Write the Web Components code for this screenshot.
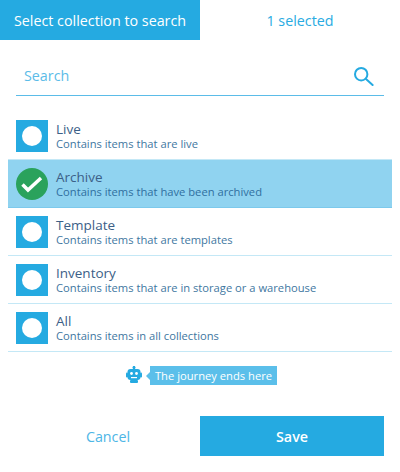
<!DOCTYPE html>
<html>
<head>
<meta charset="utf-8">
<style>
    html, body { margin: 0; padding: 0; background: #fff; }
    body { width: 400px; height: 472px; overflow: hidden; font-family: "Open Sans", "Noto Sans", sans-serif; }
</style>
</head>
<body>
<collection-picker>
    <picker-tabs active="Select collection to search" other="1 selected"></picker-tabs>
    <search-box placeholder="Search"></search-box>
    <div style="padding-top: 16px;">
        <collection-row name="Live" description="Contains items that are live"></collection-row>
        <collection-row name="Archive" description="Contains items that have been archived" selected></collection-row>
        <collection-row name="Template" description="Contains items that are templates"></collection-row>
        <collection-row name="Inventory" description="Contains items that are in storage or a warehouse"></collection-row>
        <collection-row name="All" description="Contains items in all collections"></collection-row>
    </div>
    <journey-end>The journey ends here</journey-end>
    <picker-actions></picker-actions>
</collection-picker>

<script>
class CollectionPicker extends HTMLElement {
    constructor() {
        super();
        this.attachShadow({ mode: "open" });
        this.shadowRoot.innerHTML = `
            <style>
                :host { display: block; width: 400px; height: 472px; }
            </style>
            <slot></slot>
        `;
    }
}

class PickerTabs extends HTMLElement {
    constructor() {
        super();
        this.attachShadow({ mode: "open" });
        this.shadowRoot.innerHTML = `
            <style>
                :host { display: flex; height: 40px; font-size: 14.3px; }
                div {
                    width: 200px;
                    display: flex;
                    justify-content: center;
                    align-items: center;
                    color: #29abe2;
                }
                .active { background-color: #25aae1; color: #fff; }
            </style>
            <div class="active">${this.getAttribute("active")}</div>
            <div>${this.getAttribute("other")}</div>
        `;
    }
}

class SearchBox extends HTMLElement {
    constructor() {
        super();
        this.attachShadow({ mode: "open" });
        this.shadowRoot.innerHTML = `
            <style>
                :host {
                    display: flex;
                    align-items: center;
                    justify-content: space-between;
                    box-sizing: border-box;
                    height: 40px;
                    margin: 16px 16px 0;
                    padding: 0 8px;
                    border-bottom: 1px solid #5bbce8;
                    color: #5bbce8;
                    font-size: 14.3px;
                }
                svg { display: block; margin-right: 2px; margin-top: 1px; }
            </style>
            <span>${this.getAttribute("placeholder")}</span>
            <svg width="20" height="20" viewBox="0 0 20 20" fill="none" stroke="#25aae1" stroke-width="2">
                <circle cx="7.2" cy="8.2" r="6.2"></circle>
                <path d="M12 13l6.6 6" stroke-linecap="round"></path>
            </svg>
        `;
    }
}

class CollectionRow extends HTMLElement {
    constructor() {
        super();
        this.attachShadow({ mode: "open" });
        const mark = this.hasAttribute("selected")
            ? `<svg width="32" height="32" viewBox="0 0 32 32">
                   <circle cx="16" cy="16" r="16" fill="#2aa25c"></circle>
                   <path d="M6.5 16.5l5.5 5.5L25 10" fill="none" stroke="#fff" stroke-width="3.5"></path>
               </svg>`
            : `<svg width="32" height="32" viewBox="0 0 32 32">
                   <rect width="32" height="32" fill="#25aae1"></rect>
                   <circle cx="16" cy="16" r="10" fill="#fff"></circle>
               </svg>`;
        this.shadowRoot.innerHTML = `
            <style>
                :host {
                    display: flex;
                    align-items: center;
                    gap: 8px;
                    box-sizing: border-box;
                    height: 48px;
                    margin: 0 8px;
                    padding: 0 8px;
                    border-bottom: 1px solid #c4e8f6;
                    color: #3c6087;
                }
                :host([selected]) {
                    background-color: #90d3f0;
                    border-bottom-color: #7cc9ec;
                }
                svg { display: block; flex: none; }
                .name { font-size: 13.5px; line-height: 16px; }
                .description { font-size: 11.2px; line-height: 14px; color: #41779f; }
                :host([selected]) .description { color: #2f6f9f; }
            </style>
            ${mark}
            <div>
                <div class="name">${this.getAttribute("name")}</div>
                <div class="description">${this.getAttribute("description")}</div>
            </div>
        `;
    }
}

class JourneyEnd extends HTMLElement {
    constructor() {
        super();
        this.attachShadow({ mode: "open" });
        this.shadowRoot.innerHTML = `
            <style>
                :host {
                    display: flex;
                    justify-content: center;
                    align-items: center;
                    gap: 8px;
                    margin-top: 13px;
                    height: 20px;
                    padding-left: 3px;
                }
                .tip {
                    position: relative;
                    display: flex;
                    align-items: center;
                    height: 19px;
                    padding: 0 5px;
                    background-color: #5bbfea;
                    color: #fff;
                    font-size: 11.2px;
                }
                .tip::before {
                    content: "";
                    position: absolute;
                    left: -4px;
                    top: 6px;
                    border-style: solid;
                    border-width: 4px 4px 4px 0;
                    border-color: transparent #5bbfea transparent transparent;
                }
            </style>
            <svg width="16" height="18" viewBox="0 0 16 18">
                <rect x="7" y="0" width="2" height="3" fill="#25aae1"></rect>
                <circle cx="8" cy="1.5" r="1.5" fill="#25aae1"></circle>
                <rect x="1.5" y="3" width="13" height="11" rx="3" fill="#25aae1"></rect>
                <rect x="0" y="6.5" width="2" height="5" rx="1" fill="#25aae1"></rect>
                <rect x="14" y="6.5" width="2" height="5" rx="1" fill="#25aae1"></rect>
                <rect x="4" y="14" width="8" height="3" rx="1" fill="#25aae1"></rect>
                <circle cx="5.5" cy="7.5" r="1.4" fill="#fff"></circle>
                <circle cx="10.5" cy="7.5" r="1.4" fill="#fff"></circle>
                <rect x="5" y="11" width="6" height="1.2" fill="#fff"></rect>
            </svg>
            <div class="tip"><slot></slot></div>
        `;
    }
}

class PickerActions extends HTMLElement {
    constructor() {
        super();
        this.attachShadow({ mode: "open" });
        this.shadowRoot.innerHTML = `
            <style>
                :host {
                    display: flex;
                    margin-top: 31px;
                    height: 40px;
                    font-size: 14.3px;
                }
                div {
                    display: flex;
                    justify-content: center;
                    align-items: center;
                }
                .cancel { width: 200px; box-sizing: border-box; padding-left: 16px; color: #4db6e6; }
                .save { width: 184px; background-color: #25aae1; color: #fff; font-weight: 600; }
            </style>
            <div class="cancel">Cancel</div>
            <div class="save">Save</div>
        `;
    }
}

window.customElements.define("collection-picker", CollectionPicker);
window.customElements.define("picker-tabs", PickerTabs);
window.customElements.define("search-box", SearchBox);
window.customElements.define("collection-row", CollectionRow);
window.customElements.define("journey-end", JourneyEnd);
window.customElements.define("picker-actions", PickerActions);
</script>
</body>
</html>
